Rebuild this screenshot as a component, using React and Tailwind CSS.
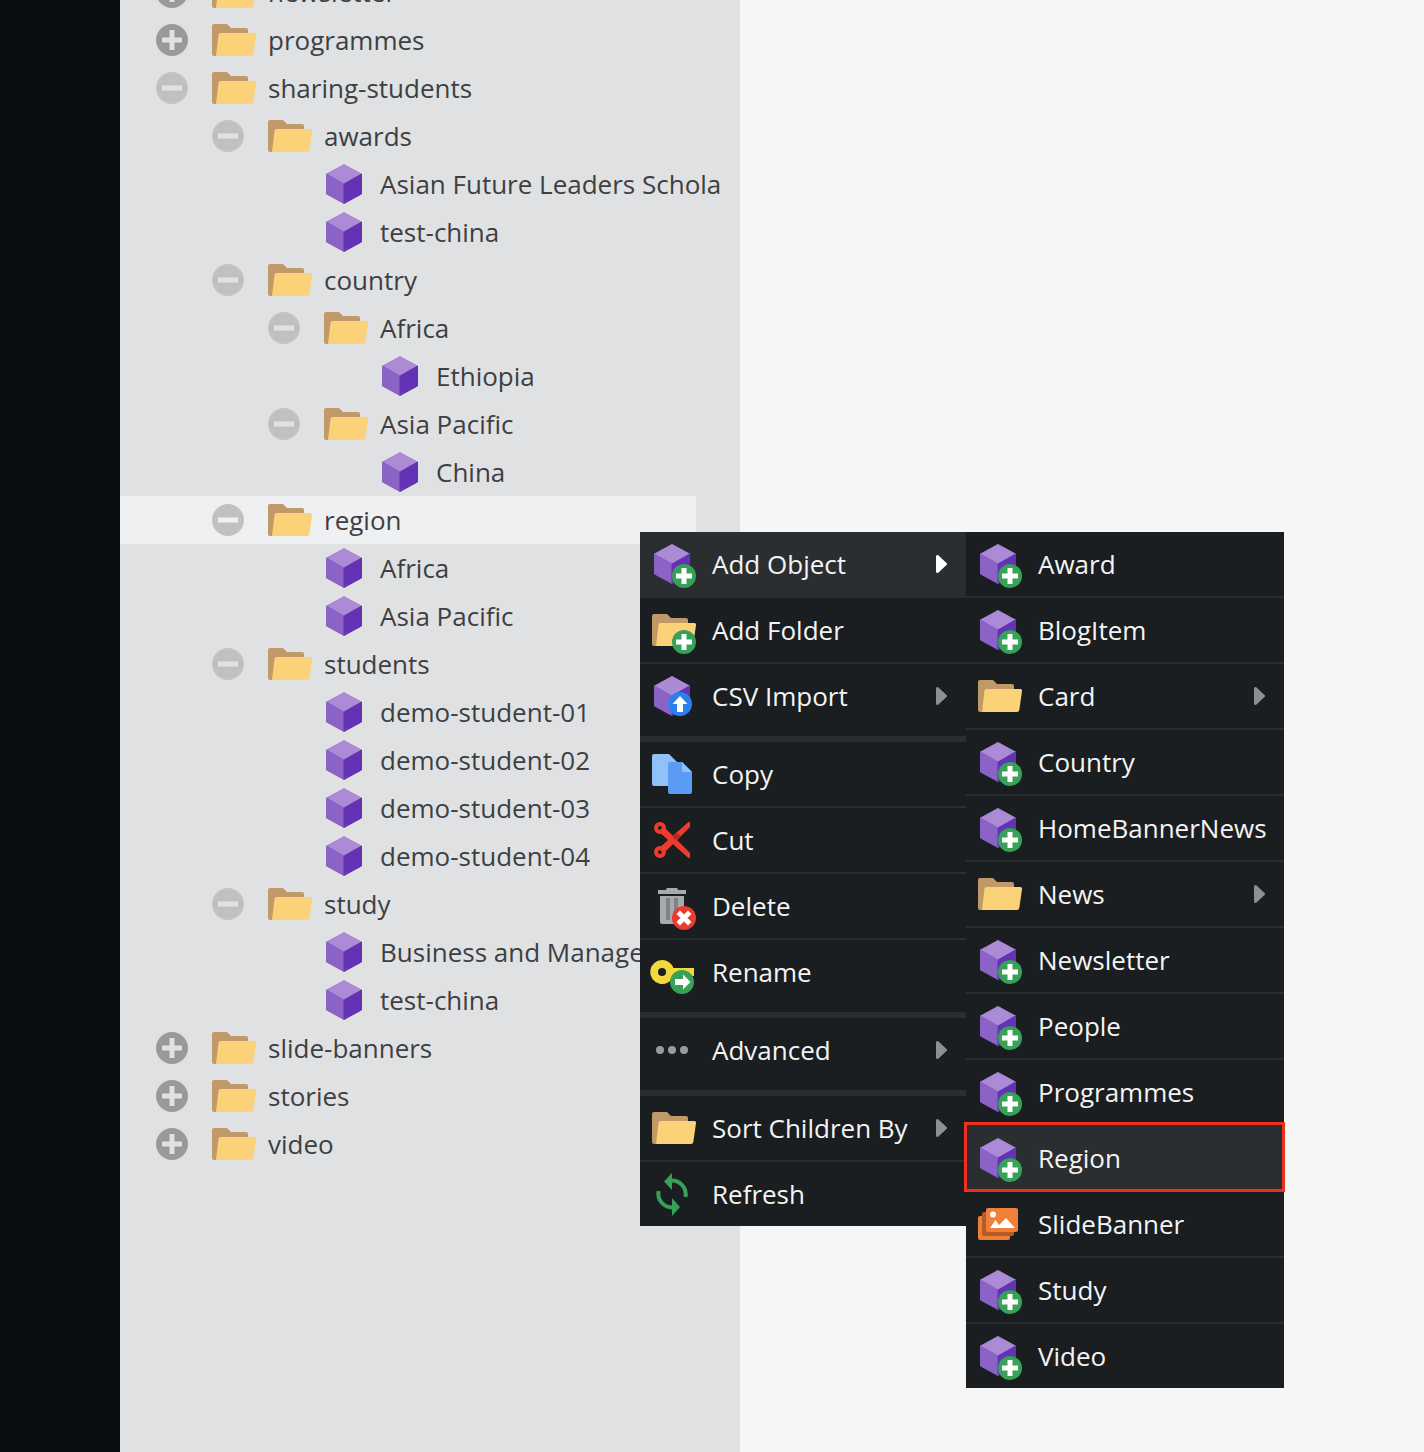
const tree = [
  { depth: 0, type: "plus", name: "newsletter" },
  { depth: 0, type: "plus", name: "programmes" },
  { depth: 0, type: "minus", name: "sharing-students" },
  { depth: 1, type: "minus", name: "awards" },
  { depth: 2, type: "node", name: "Asian Future Leaders Scholarship" },
  { depth: 2, type: "node", name: "test-china" },
  { depth: 1, type: "minus", name: "country" },
  { depth: 2, type: "minus", name: "Africa" },
  { depth: 3, type: "node", name: "Ethiopia" },
  { depth: 2, type: "minus", name: "Asia Pacific" },
  { depth: 3, type: "node", name: "China" },
  { depth: 1, type: "minus", name: "region", active: true },
  { depth: 2, type: "node", name: "Africa" },
  { depth: 2, type: "node", name: "Asia Pacific" },
  { depth: 1, type: "minus", name: "students" },
  { depth: 2, type: "node", name: "demo-student-01" },
  { depth: 2, type: "node", name: "demo-student-02" },
  { depth: 2, type: "node", name: "demo-student-03" },
  { depth: 2, type: "node", name: "demo-student-04" },
  { depth: 1, type: "minus", name: "study" },
  { depth: 2, type: "node", name: "Business and Management" },
  { depth: 2, type: "node", name: "test-china" },
  { depth: 0, type: "plus", name: "slide-banners" },
  { depth: 0, type: "plus", name: "stories" },
  { depth: 0, type: "plus", name: "video" },
]

const indent = ["pl-[36px]", "pl-[92px]", "pl-[148px]", "pl-[204px]"]

const mainMenu = [
  { icon: "addCube", label: "Add Object", arrow: true, hover: true },
  { icon: "addFolder", label: "Add Folder" },
  { icon: "csv", label: "CSV Import", arrow: true, thick: true },
  { icon: "copy", label: "Copy" },
  { icon: "cut", label: "Cut" },
  { icon: "delete", label: "Delete" },
  { icon: "rename", label: "Rename", thick: true },
  { icon: "dots", label: "Advanced", arrow: true, thick: true },
  { icon: "folder", label: "Sort Children By", arrow: true },
  { icon: "refresh", label: "Refresh", last: true },
]

const subMenu = [
  { icon: "addCube", label: "Award" },
  { icon: "addCube", label: "BlogItem" },
  { icon: "folder", label: "Card", arrow: true },
  { icon: "addCube", label: "Country" },
  { icon: "addCube", label: "HomeBannerNews" },
  { icon: "folder", label: "News", arrow: true },
  { icon: "addCube", label: "Newsletter" },
  { icon: "addCube", label: "People" },
  { icon: "addCube", label: "Programmes" },
  { icon: "addCube", label: "Region", hover: true },
  { icon: "slide", label: "SlideBanner" },
  { icon: "addCube", label: "Study" },
  { icon: "addCube", label: "Video", last: true },
]

function FolderShape() {
  return (
    <>
      <path fill="#bf9a68" d="M2 0h13l4 4h15a2 2 0 0 1 2 2v4H8L4.500 32H2a2 2 0 0 1-2-2V2a2 2 0 0 1 2-2z" />
      <path fill="#fbd277" d="M8.500 9H42a2 2 0 0 1 2 2.300L41.300 30a2.400 2.400 0 0 1-2.400 2H4L6.500 10.800A2 2 0 0 1 8.500 9z" />
    </>
  )
}

function CubeShape() {
  return (
    <g strokeWidth="1" strokeLinejoin="round">
      <path fill="#ab8ad6" stroke="#ab8ad6" d="M18 .5 35.500 10 18 20 .5 10z" />
      <path fill="#8b62c6" stroke="#8b62c6" d="M.5 10 18 20v19.500L.5 30z" />
      <path fill="#6432b4" stroke="#6432b4" d="M35.500 10 18 20v19.500L35.500 30z" />
    </g>
  )
}

function Badge({ x = 36, y = 36, color = "#37a157", children }) {
  return (
    <g transform={`translate(${x} ${y})`}>
      <circle r="12" fill={color} />
      {children}
    </g>
  )
}

function Plus() {
  return <path fill="#fff" d="M-2.500-8h5v5.500H8v5H2.500V8h-5V2.500H-8v-5h5.500z" />
}

function MenuIcon({ name }) {
  return (
    <svg width="48" height="48" viewBox="0 0 48 48" className="shrink-0">
      {name === "addCube" && (
        <>
          <g transform="translate(6 4)"><CubeShape /></g>
          <Badge><Plus /></Badge>
        </>
      )}
      {name === "addFolder" && (
        <>
          <g transform="translate(4 8)"><FolderShape /></g>
          <Badge><Plus /></Badge>
        </>
      )}
      {name === "folder" && <g transform="translate(4 8)"><FolderShape /></g>}
      {name === "csv" && (
        <>
          <g transform="translate(6 4)"><CubeShape /></g>
          <Badge x={32} y={32} color="#2d80ec">
            <path fill="#fff" d="M0-8 7.500 0H3v8h-6V0h-4.500z" />
          </Badge>
        </>
      )}
      {name === "copy" && (
        <>
          <path fill="#90c1f9" d="M6 4h15l11 11v19a2 2 0 0 1-2 2H6a2 2 0 0 1-2-2V6a2 2 0 0 1 2-2z" />
          <path fill="#5b9bf3" d="M22 12h12l10 10v20a2 2 0 0 1-2 2H22a2 2 0 0 1-2-2V14a2 2 0 0 1 2-2z" />
          <path fill="#90c1f9" d="M34 12l10 10H36a2 2 0 0 1-2-2z" />
        </>
      )}
      {name === "cut" && (
        <>
          <circle cx="12" cy="12" r="4" fill="none" stroke="#ee3b2e" strokeWidth="4" />
          <circle cx="12" cy="36" r="4" fill="none" stroke="#ee3b2e" strokeWidth="4" />
          <path fill="#ee3b2e" d="M15.500 10.500 42 37v5h-1.500L10.500 15.500z" />
          <path fill="#ee3b2e" d="M10.500 32.500 40.500 6H42v5L15.500 37.500z" />
          <path fill="#b5281e" d="M24.500 21 29 17l3.500 2.500-5 4.500z" />
        </>
      )}
      {name === "delete" && (
        <>
          <path fill="#a9aaab" d="M18 8c0-1.500 1-2 2-2h8c1 0 2 .5 2 2zM10 8h28v4H10zM12 14h24v26a2 2 0 0 1-2 2H14a2 2 0 0 1-2-2z" />
          <path fill="#808183" d="M18 16h4v22h-4zM26 16h4v22h-4z" />
          <Badge color="#ea3b2e">
            <path fill="#fff" d="m-4-7.500 4 4 4-4L7.500-4l-4 4 4 4L4 7.500l-4-4-4 4L-7.500 4l4-4-4-4z" />
          </Badge>
        </>
      )}
      {name === "rename" && (
        <>
          <path fill="#f1d93b" d="M14 12a12 12 0 0 1 11.500 8H46v8H25.500A12 12 0 1 1 14 12z" />
          <circle cx="14" cy="24" r="4" fill="#1a1e21" />
          <Badge x={34} y={34}>
            <path fill="#fff" d="M1-7.500 8.500 0 1 7.500V3h-8v-6h8z" />
          </Badge>
        </>
      )}
      {name === "dots" && (
        <g fill="#9a9b9d">
          <circle cx="12" cy="24" r="4" />
          <circle cx="24" cy="24" r="4" />
          <circle cx="36" cy="24" r="4" />
        </g>
      )}
      {name === "refresh" && (
        <g fill="#37a157">
          <path fill="none" stroke="#37a157" strokeWidth="4" d="M23 10.500A14 14 0 0 1 37.500 27" />
          <path fill="none" stroke="#37a157" strokeWidth="4" d="M25 37.500A14 14 0 0 1 10.500 21" />
          <path d="M24 3v17l-8-8.500zM24 28v18l8-9z" />
        </g>
      )}
      {name === "slide" && (
        <>
          <rect x="4" y="16" width="32" height="24" rx="2" fill="#ee7f37" />
          <rect x="8" y="12" width="32" height="24" rx="2" fill="#b65a2a" />
          <rect x="12" y="8" width="32" height="24" rx="2" fill="#f08038" />
          <circle cx="19" cy="14.500" r="3" fill="#fff" />
          <path fill="#fff" d="M16 28l5.500-8 3.500 5 7-7 9 10z" />
        </>
      )}
    </svg>
  )
}

function Arrow({ active }) {
  return (
    <svg width="11" height="18" viewBox="0 0 11 18" className="ml-auto mr-[19px] shrink-0">
      <path
        fill={active ? "#ffffff" : "#8e8f91"}
        d="M1.500 0a1.500 1.500 0 0 0-1.500 1.500v15a1.500 1.500 0 0 0 1.500 1.500c.4 0 .8-.2 1-.4l8-7.500a1.500 1.500 0 0 0 0-2.200l-8-7.500c-.2-.2-.6-.4-1-.4z"
      />
    </svg>
  )
}

function MenuRow({ item, active }) {
  let border = "border-b-2 border-[#2a2e31]"
  if (item.last) border = ""

  const row = (
    <div className={`flex items-center pl-[8px] h-[64px] ${item.hover ? "bg-[#2b2e31]" : ""}`}>
      <MenuIcon name={item.icon} />
      <span className="ml-4 whitespace-nowrap text-[26px] leading-none text-[#f4f4f4]">{item.label}</span>
      {item.arrow && <Arrow active={active} />}
    </div>
  )

  if (item.thick) {
    return (
      <div>
        <div className="h-[72px]">{row}</div>
        <div className="h-[6px] bg-[#2a2e31]" />
      </div>
    )
  }

  return (
    <div className={`${border} ${item.hover ? "bg-[#2b2e31]" : ""}`}>{row}</div>
  )
}

function TreeRow({ row }) {
  return (
    <div className={`flex items-center h-[48px] shrink-0 ${indent[row.depth]} ${row.active ? "bg-[#eff0f2] w-[576px]" : "w-[900px]"}`}>
      {row.type === "node" ? (
        <svg width="36" height="40" viewBox="0 0 36 40" className="ml-[58px] mr-[18px] shrink-0">
          <CubeShape />
        </svg>
      ) : (
        <>
          <svg width="32" height="32" viewBox="0 0 32 32" className="shrink-0">
            <circle cx="16" cy="16" r="16" fill={row.type === "plus" ? "#98999b" : "#c0c1c3"} />
            <path
              fill={row.active ? "#eff0f2" : "#e0e1e3"}
              d={row.type === "plus" ? "M13.500 6h5v7.500H26v5h-7.500V26h-5v-7.500H6v-5h7.500z" : "M6 13.500h20v5H6z"}
            />
          </svg>
          <svg width="44" height="32" viewBox="0 0 44 32" className="ml-6 mr-3 shrink-0">
            <FolderShape />
          </svg>
        </>
      )}
      <span className="whitespace-nowrap text-[26px] leading-none text-[#3d3f42]">{row.name}</span>
    </div>
  )
}

export default function App() {
  return (
    <div className="relative flex h-[1452px] overflow-hidden bg-[#f6f6f6] font-['Open_Sans',sans-serif]">
      <div className="w-[120px] shrink-0 bg-[#0a0d10]" />

      <div className="w-[620px] shrink-0 bg-[#e0e1e3] pr-5">
        <div className="-mt-8 flex flex-col overflow-hidden">
          {tree.map((row, i) => <TreeRow key={i} row={row} />)}
        </div>
      </div>

      {/* context menu */}
      <div className="absolute left-[640px] top-[532px] flex items-start">
        <div className="w-[326px] bg-[#1a1e21]">
          {mainMenu.map((item) => <MenuRow key={item.label} item={item} active={item.hover} />)}
        </div>
        <div className="relative w-[318px] bg-[#1a1e21]">
          {subMenu.map((item) => <MenuRow key={item.label} item={item} />)}
          <div className="absolute -left-[2px] -right-[1px] top-[590px] h-[70px] border-[3px] border-[#f0301e]" />
        </div>
      </div>
    </div>
  )
}
